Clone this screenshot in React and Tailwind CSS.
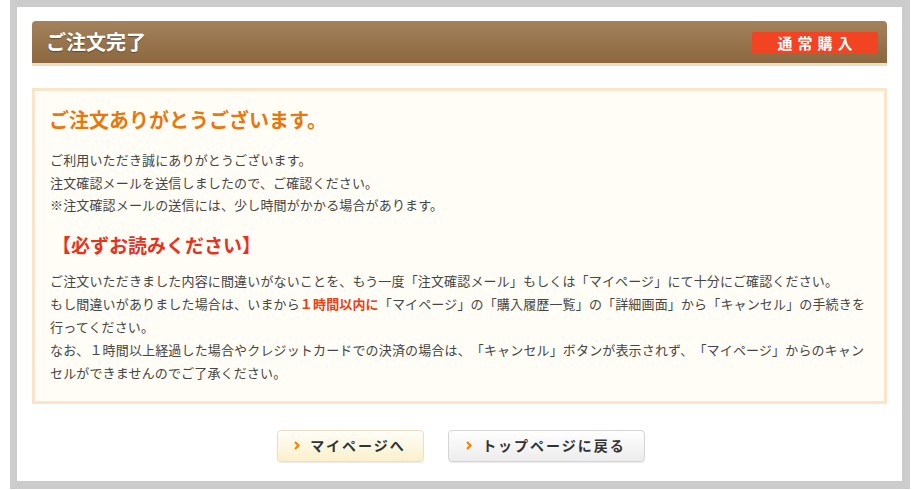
const FONT = "font-['Meiryo','Noto_Sans_CJK_JP',sans-serif] [text-spacing-trim:space-all]";

function Chevron() {
  return (
    <svg width="6" height="9" viewBox="0 0 6 9" className="shrink-0">
      <polyline points="1,1 4.5,4.5 1,8" fill="none" stroke="#f08300" strokeWidth="2.2" />
    </svg>
  );
}

export default function App() {
  return (
    <div className={`${FONT} bg-white w-[920px] h-[490px] overflow-hidden`}>
      <div className="ml-[10px] w-[900px] border-[7px] border-r-8 border-b-8 border-[#cccccc] bg-white px-[15px] pt-[14px] pb-[19px]">
        {/* header bar */}
        <div className="h-[45px] rounded-t-[4px] bg-gradient-to-b from-[#a3825c] to-[#8c673f] border-b-[3px] border-[#e9e0c2] flex items-center justify-between pl-[14px] pr-[9px]">
          <h1 className="text-[20px] font-bold text-white leading-none [text-shadow:0_1px_1px_rgba(0,0,0,0.35)]">
            ご注文完了
          </h1>
          <span className="w-[126px] h-[22px] mt-[1px] bg-[#f24322] rounded-[2px] flex items-center justify-center text-white text-[15px] font-bold tracking-[5px] pl-[5px] leading-none">
            通常購入
          </span>
        </div>

        {/* message box */}
        <div className="mt-[22px] border-[3px] border-[#fbe5c9] bg-[#fffdf6] pt-[15px] pb-[17px] pl-[14px] pr-[12px]">
          <h2 className="text-[20px] font-bold text-[#e8770e] leading-[28px]">
            ご注文ありがとうございます。
          </h2>
          <p className="mt-[15px] pl-[1px] text-[13px] text-[#454545] leading-[22.5px] tracking-[0.15px]">
            ご利用いただき誠にありがとうございます。<br />
            注文確認メールを送信しましたので、ご確認ください。<br />
            ※注文確認メールの送信には、少し時間がかかる場合があります。
          </p>
          <h3 className="mt-[14px] ml-[3px] text-[19px] font-bold text-[#e8321e] leading-[28px]">
            【必ずお読みください】
          </h3>
          <p className="mt-[10px] pl-[1px] text-[13px] text-[#454545] leading-[23px] tracking-[0.15px] whitespace-nowrap">
            ご注文いただきました内容に間違いがないことを、もう一度「注文確認メール」もしくは「マイページ」にて十分にご確認ください。<br />
            もし間違いがありました場合は、いまから<span className="font-bold text-[#f03c14]">１時間以内に</span>「マイページ」の「購入履歴一覧」の「詳細画面」から「キャンセル」の手続きを<br />
            行ってください。<br />
            なお、１時間以上経過した場合やクレジットカードでの決済の場合は、「キャンセル」ボタンが表示されず、「マイページ」からのキャン<br />
            セルができませんのでご了承ください。
          </p>
        </div>

        {/* buttons */}
        <div className="mt-[26px] flex justify-center gap-[24px] pl-[2px]">
          <button className="w-[147px] h-[32px] rounded-[4px] border border-[#eadfc4] bg-gradient-to-b from-[#fffef8] to-[#fbf0cb] flex items-center justify-center gap-[10px] text-[14px] font-bold text-[#333] tracking-[2px] shadow-[0_1px_1px_rgba(0,0,0,0.08)]">
            <Chevron />
            <span>マイページへ</span>
          </button>
          <button className="w-[197px] h-[32px] rounded-[4px] border border-[#d5d5d5] bg-gradient-to-b from-white to-[#ececec] flex items-center justify-center gap-[10px] text-[14px] font-bold text-[#333] tracking-[2px] shadow-[0_1px_1px_rgba(0,0,0,0.08)]">
            <Chevron />
            <span>トップページに戻る</span>
          </button>
        </div>
      </div>
    </div>
  );
}
